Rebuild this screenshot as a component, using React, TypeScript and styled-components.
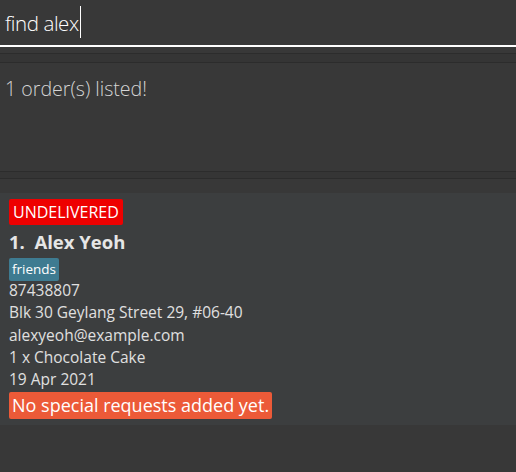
import React from "react";
import styled, { createGlobalStyle } from "styled-components";

const Global = createGlobalStyle`
  html, body { margin: 0; padding: 0; background: #383838; }
  body { font-family: "Open Sans", "Noto Sans", sans-serif; color: #ffffff; }
  #root { height: 472px; overflow: hidden; }
`;

const Page = styled.div`
  display: flex;
  flex-direction: column;
  height: 472px;
  background: #383838;
`;

const CommandBox = styled.div`
  height: 45px;
  display: flex;
  align-items: center;
  padding-left: 5px;
  background: #383838;
  border-bottom: 2px solid #ffffff;
  font-weight: 300;
  font-size: 20.5px;
  letter-spacing: -0.4px;
  color: #ffffff;
`;

const Caret = styled.span`
  display: inline-block;
  width: 1px;
  height: 32px;
  background: #ffffff;
  margin-left: 1px;
  margin-top: -2px;
`;

const Separator = styled.div<{ $top: number; $inner: number }>`
  margin-top: ${(p) => p.$top}px;
  height: ${(p) => p.$inner}px;
  border-top: 1px solid #2c2c2c;
  border-bottom: 1px solid #2c2c2c;
  background: #353535;
`;

const ResultDisplay = styled.div`
  height: 108px;
  box-sizing: border-box;
  padding: 12px 5px;
  font-weight: 300;
  font-size: 19.6px;
  color: #d4d4d4;
`;

const Card = styled.div`
  margin-top: 14px;
  background: #3c3e3f;
  padding: 6px 9px 6px;
  display: flex;
  flex-direction: column;
  align-items: flex-start;
  height: 232px;
  box-sizing: border-box;
`;

const Badge = styled.span<{ $bg: string; $size: number; $lh: number; $pad: string }>`
  background: ${(p) => p.$bg};
  color: #ffffff;
  font-size: ${(p) => p.$size}px;
  line-height: ${(p) => p.$lh}px;
  padding: ${(p) => p.$pad};
  border-radius: 2px;
`;

const Name = styled.div`
  font-weight: 700;
  font-size: 18.5px;
  line-height: 26px;
  color: #e6e6e6;
  margin: 4px 0 3px;
  white-space: pre;
`;

const Info = styled.div`
  font-size: 15.5px;
  color: #e0e0e0;
  line-height: 22.3px;
`;

const Details = styled.div`
  display: flex;
  flex-direction: column;
  margin: -2px 0 2px;
`;

export default function App() {
  return (
    <Page>
      <Global />
      <CommandBox>
        find alex
        <Caret />
      </CommandBox>
      <Separator $top={6} $inner={8} />
      <ResultDisplay>1 order(s) listed!</ResultDisplay>
      <Separator $top={0} $inner={6} />
      <Card>
        <Badge $bg="#ee0000" $size={16} $lh={24} $pad="1px 4px">UNDELIVERED</Badge>
        <Name>{"1.  Alex Yeoh"}</Name>
        <Badge $bg="#3e7b91" $size={13.5} $lh={19} $pad="2px 3px">friends</Badge>
        <Details>
          <Info>87438807</Info>
          <Info>Blk 30 Geylang Street 29, #06-40</Info>
          <Info>alexyeoh@example.com</Info>
          <Info>1 x Chocolate Cake</Info>
          <Info>19 Apr 2021</Info>
        </Details>
        <Badge $bg="#ec5a38" $size={18} $lh={27} $pad="0px 3px">No special requests added yet.</Badge>
      </Card>
    </Page>
  );
}
